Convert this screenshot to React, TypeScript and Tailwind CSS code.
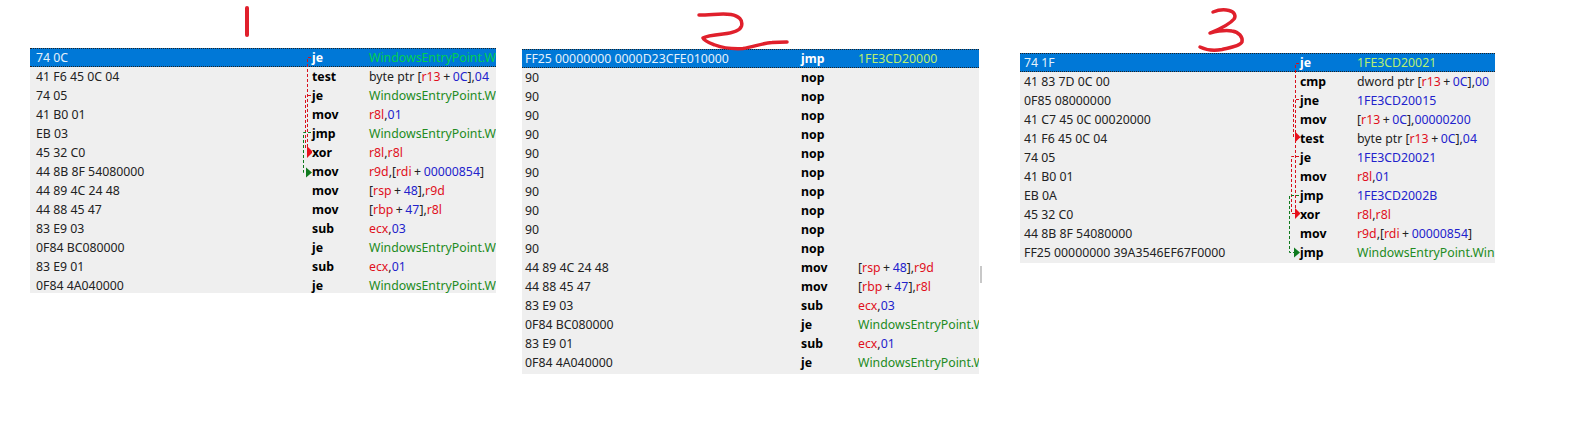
type Kind = 'r' | 'n' | 'g' | 'k' | 'p'
type Token = [string, Kind]
type Row = { bytes: string; op: string; args?: Token[] }

const entry: Token[] = [['WindowsEntryPoint.Win', 'g']]

const sharedTail: Row[] = [
  { bytes: '44 89 4C 24 48', op: 'mov', args: [['[', 'k'], ['rsp', 'r'], ['+', 'p'], ['48', 'n'], [']', 'k'], [',', 'k'], ['r9d', 'r']] },
  { bytes: '44 88 45 47', op: 'mov', args: [['[', 'k'], ['rbp', 'r'], ['+', 'p'], ['47', 'n'], [']', 'k'], [',', 'k'], ['r8l', 'r']] },
  { bytes: '83 E9 03', op: 'sub', args: [['ecx', 'r'], [',', 'k'], ['03', 'n']] },
  { bytes: '0F84 BC080000', op: 'je', args: entry },
  { bytes: '83 E9 01', op: 'sub', args: [['ecx', 'r'], [',', 'k'], ['01', 'n']] },
  { bytes: '0F84 4A040000', op: 'je', args: entry },
]

const testArgs: Token[] = [['byte ptr [', 'k'], ['r13', 'r'], ['+', 'p'], ['0C', 'n'], [']', 'k'], [',', 'k'], ['04', 'n']]
const movR8: Token[] = [['r8l', 'r'], [',', 'k'], ['01', 'n']]
const xorR8: Token[] = [['r8l', 'r'], [',', 'k'], ['r8l', 'r']]
const movR9: Token[] = [['r9d', 'r'], [',', 'k'], ['[', 'k'], ['rdi', 'r'], ['+', 'p'], ['00000854', 'n'], [']', 'k']]

const rowsOne: Row[] = [
  { bytes: '74 0C', op: 'je', args: entry },
  { bytes: '41 F6 45 0C 04', op: 'test', args: testArgs },
  { bytes: '74 05', op: 'je', args: entry },
  { bytes: '41 B0 01', op: 'mov', args: movR8 },
  { bytes: 'EB 03', op: 'jmp', args: entry },
  { bytes: '45 32 C0', op: 'xor', args: xorR8 },
  { bytes: '44 8B 8F 54080000', op: 'mov', args: movR9 },
  ...sharedTail,
]

const rowsTwo: Row[] = [
  { bytes: 'FF25 00000000 0000D23CFE010000', op: 'jmp', args: [['1FE3CD20000', 'n']] },
  ...Array.from({ length: 10 }, () => ({ bytes: '90', op: 'nop' })),
  ...sharedTail,
]

const rowsThree: Row[] = [
  { bytes: '74 1F', op: 'je', args: [['1FE3CD20021', 'n']] },
  { bytes: '41 83 7D 0C 00', op: 'cmp', args: [['dword ptr [', 'k'], ['r13', 'r'], ['+', 'p'], ['0C', 'n'], [']', 'k'], [',', 'k'], ['00', 'n']] },
  { bytes: '0F85 08000000', op: 'jne', args: [['1FE3CD20015', 'n']] },
  { bytes: '41 C7 45 0C 00020000', op: 'mov', args: [['[', 'k'], ['r13', 'r'], ['+', 'p'], ['0C', 'n'], [']', 'k'], [',', 'k'], ['00000200', 'n']] },
  { bytes: '41 F6 45 0C 04', op: 'test', args: testArgs },
  { bytes: '74 05', op: 'je', args: [['1FE3CD20021', 'n']] },
  { bytes: '41 B0 01', op: 'mov', args: movR8 },
  { bytes: 'EB 0A', op: 'jmp', args: [['1FE3CD2002B', 'n']] },
  { bytes: '45 32 C0', op: 'xor', args: xorR8 },
  { bytes: '44 8B 8F 54080000', op: 'mov', args: movR9 },
  { bytes: 'FF25 00000000 39A3546EF67F0000', op: 'jmp', args: entry },
]

function tokenClass(kind: Kind, selected: boolean) {
  if (selected) return kind === 'g' ? 'text-[#00d050]' : 'text-[#b8f070]'
  if (kind === 'r') return 'text-[#e0101c]'
  if (kind === 'n') return 'text-[#2222cc]'
  if (kind === 'g') return 'text-[#228b22]'
  if (kind === 'p') return 'px-[2.5px] text-[#222222]'
  return 'text-[#222222]'
}

function AsmRow({ row, selected, bytesCol, opCol }: { row: Row; selected: boolean; bytesCol: string; opCol: string }) {
  return (
    <div
      className={
        selected
          ? 'flex h-[19px] items-center overflow-hidden whitespace-nowrap border-y border-dotted border-[#222222] bg-[#0078d7] text-[#e6f2fb]'
          : 'flex h-[19px] items-center overflow-hidden whitespace-nowrap text-[#222222]'
      }
    >
      <span className={bytesCol}>{row.bytes}</span>
      <span className={selected ? `${opCol} font-bold text-white` : `${opCol} font-bold text-black`}>{row.op}</span>
      <span>
        {row.args?.map(([text, kind], i) => (
          <span key={i} className={tokenClass(kind, selected)}>
            {text}
          </span>
        ))}
      </span>
    </div>
  )
}

// jump lines between the bytes column and the mnemonic column
function Dashed({ d, color }: { d: string; color: string }) {
  return <path d={d} fill="none" stroke={color} strokeWidth={1} strokeDasharray="3 2" />
}

const RED = '#d8101c'
const GREEN = '#0f7a1e'

function ArrowsOne() {
  return (
    <svg className="absolute left-[296px] top-[48px] h-[140px] w-[16px]" viewBox="0 0 16 140">
      <Dashed d="M15 9.5H11.5V100" color={RED} />
      <Dashed d="M15 47.5H9.5V100" color={RED} />
      <Dashed d="M15 84.5H7.5V124.5H10" color={GREEN} />
      <path d="M11 98l6 6-6 6z" fill="#e8101c" />
      <path d="M10 119.5l6 5-6 5z" fill="#0f7a1e" />
    </svg>
  )
}

function ArrowsThree() {
  return (
    <svg className="absolute left-[1284px] top-[53px] h-[210px] w-[16px]" viewBox="0 0 16 210">
      <Dashed d="M15 10.5H11.5V156" color={RED} />
      <Dashed d="M15 46.5H9.5V84" color={RED} />
      <Dashed d="M15 103.5H7.5V160.5H11" color={RED} />
      <Dashed d="M15 142.5H5.5V199.5H10" color={GREEN} />
      <path d="M11 78.5l5.5 5.5-5.5 5.5z" fill="#e8101c" />
      <path d="M11 155l5.5 5.5-5.5 5.5z" fill="#e8101c" />
      <path d="M10 194.5l6 5-6 5z" fill="#0f7a1e" />
    </svg>
  )
}

export default function App() {
  return (
    <div className="relative h-[435px] w-[1594px] overflow-hidden bg-white font-['Noto_Sans','Open_Sans',sans-serif] text-[12.3px] leading-[19px]">
      <div className="flex items-start pl-[30px]">
        <div className="mt-[48px] h-[245px] w-[466px] overflow-hidden bg-[#efefef]">
          {rowsOne.map((row, i) => (
            <AsmRow key={i} row={row} selected={i === 0} bytesCol="w-[282px] shrink-0 pl-[6px]" opCol="w-[57px] shrink-0" />
          ))}
        </div>
        <div className="ml-[26px] mt-[49px] h-[325px] w-[457px] overflow-hidden bg-[#efefef]">
          {rowsTwo.map((row, i) => (
            <AsmRow key={i} row={row} selected={i === 0} bytesCol="w-[279px] shrink-0 pl-[3px]" opCol="w-[57px] shrink-0" />
          ))}
        </div>
        <div className="ml-[41px] mt-[53px] h-[210px] w-[475px] overflow-hidden bg-[#efefef]">
          {rowsThree.map((row, i) => (
            <AsmRow key={i} row={row} selected={i === 0} bytesCol="w-[280px] shrink-0 pl-[4px]" opCol="w-[57px] shrink-0" />
          ))}
        </div>
      </div>

      <ArrowsOne />
      <ArrowsThree />

      {/* panel 2 scrollbar stub */}
      <div className="absolute left-[980px] top-[266px] h-[17px] w-[2px] bg-[#c8c8c8]" />

      {/* hand drawn labels */}
      <svg className="absolute left-0 top-0 h-[60px] w-[1594px]" viewBox="0 0 1594 60" fill="none" stroke="#e0202c" strokeLinecap="round" strokeLinejoin="round">
        <path d="M247 8V35" strokeWidth={4} />
        <path d="M699 15C712 15 722 13 731 14.5C739 16 743 20 741.5 26C740 31 733 33 723 34C714 35 706 36 703 38C704 41 710 43 715 45C723 48 733 49 743 48.5C753 47 763 43 772 42.5C778 42 783 42 787 42" strokeWidth={3.5} />
        <path d="M1213 12C1218 10 1223 9 1229 10.5C1235 12 1236 16 1234 19C1230 24 1220 29 1210 33C1218 31 1226 30 1232 31C1239 32 1243 37 1242 42C1240 46 1230 47.5 1222 49.5C1214 51 1206 50 1200 47" strokeWidth={3.5} />
      </svg>
    </div>
  )
}
